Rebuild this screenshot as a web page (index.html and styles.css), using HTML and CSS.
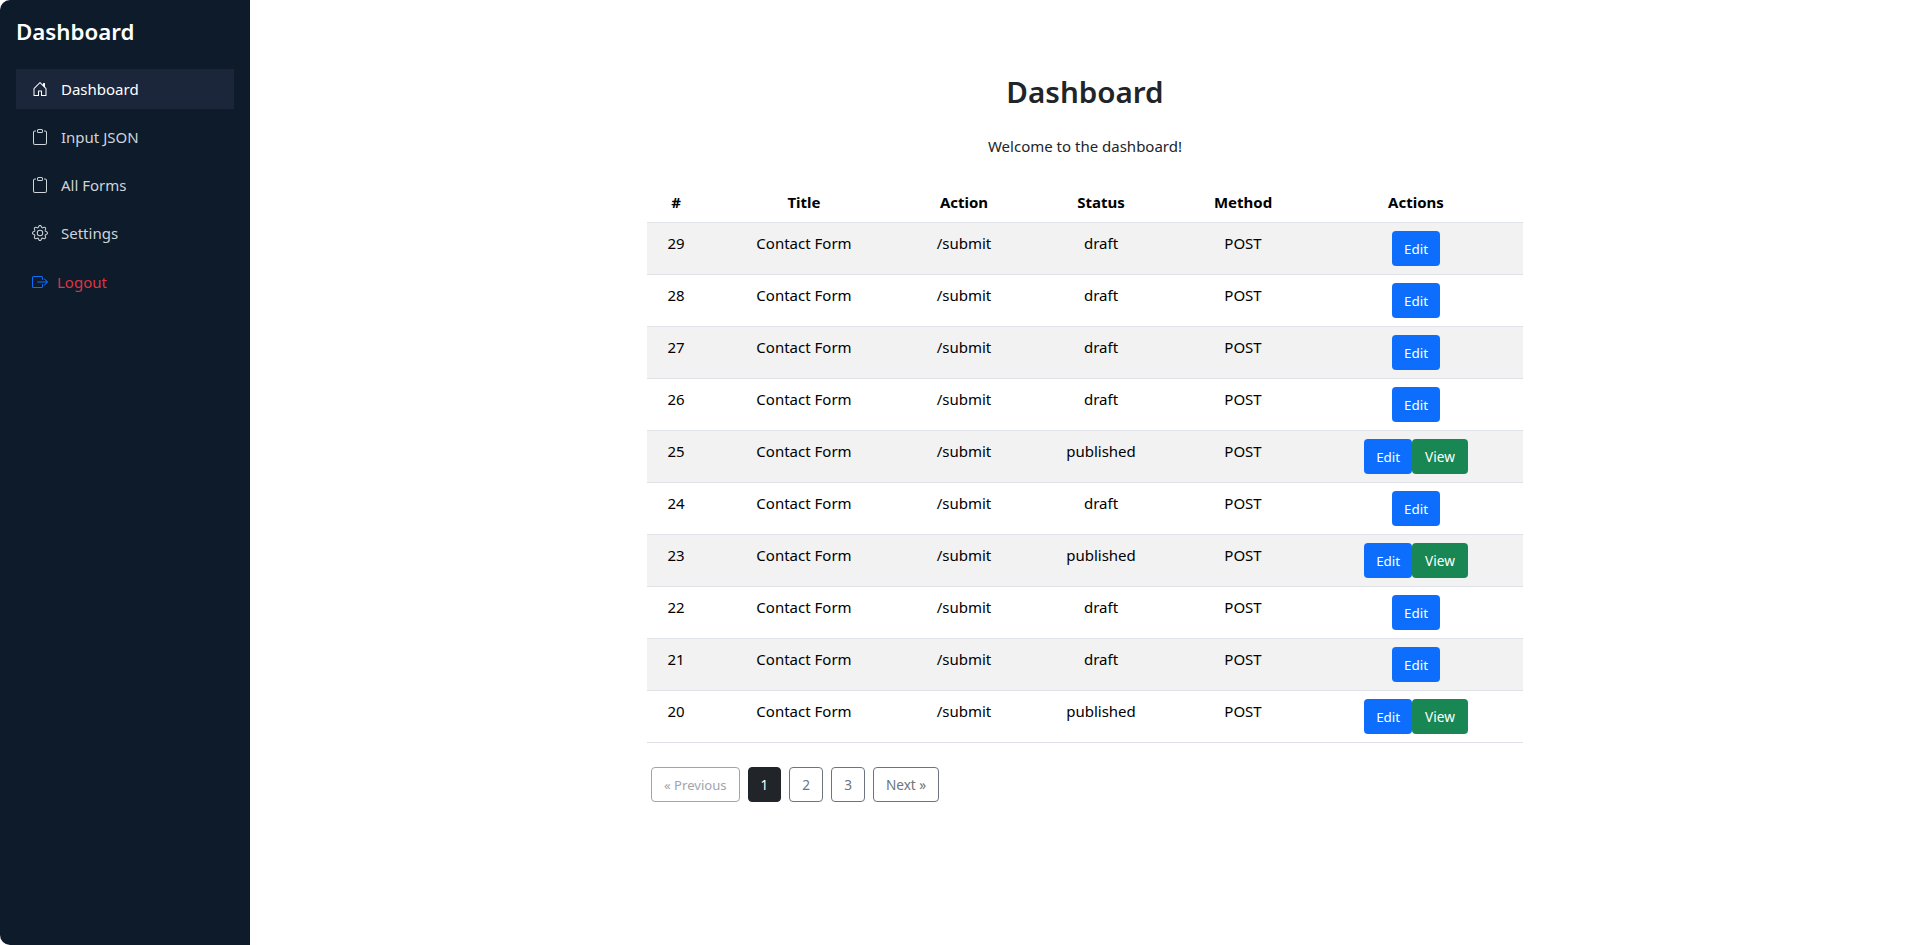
FILE: index.html
```html
<!DOCTYPE html>
<html lang="en">
<head>
<meta charset="utf-8">
<title>Dashboard</title>
<link rel="stylesheet" href="styles.css">
</head>
<body>
<div class="app">
  <aside class="sidebar">
    <div class="brand">Dashboard</div>
    <nav class="nav">
      <a class="nav-link active"><svg class="icon" viewBox="0 0 16 16"><path fill="currentColor" d="M8.354 1.146a.5.5 0 0 0-.708 0l-6 6A.5.5 0 0 0 1.5 7.5v7a.5.5 0 0 0 .5.5h4.5a.5.5 0 0 0 .5-.5v-4h2v4a.5.5 0 0 0 .5.5H14a.5.5 0 0 0 .5-.5v-7a.5.5 0 0 0-.146-.354L13 5.793V2.5a.5.5 0 0 0-.5-.5h-1a.5.5 0 0 0-.5.5v1.293L8.354 1.146ZM2.5 14V7.707l5.5-5.5 5.5 5.5V14H10v-4a.5.5 0 0 0-.5-.5h-3a.5.5 0 0 0-.5.5v4H2.5Z"/></svg>Dashboard</a>
      <a class="nav-link"><svg class="icon" viewBox="0 0 16 16"><path fill="currentColor" d="M4 1.5H3a2 2 0 0 0-2 2V14a2 2 0 0 0 2 2h10a2 2 0 0 0 2-2V3.5a2 2 0 0 0-2-2h-1v1h1a1 1 0 0 1 1 1V14a1 1 0 0 1-1 1H3a1 1 0 0 1-1-1V3.5a1 1 0 0 1 1-1h1v-1Z"/><path fill="currentColor" d="M9.5 1a.5.5 0 0 1 .5.5v1a.5.5 0 0 1-.5.5h-3a.5.5 0 0 1-.5-.5v-1a.5.5 0 0 1 .5-.5h3Zm-3-1A1.5 1.5 0 0 0 5 1.5v1A1.5 1.5 0 0 0 6.5 4h3A1.5 1.5 0 0 0 11 2.5v-1A1.5 1.5 0 0 0 9.5 0h-3Z"/></svg>Input JSON</a>
      <a class="nav-link"><svg class="icon" viewBox="0 0 16 16"><path fill="currentColor" d="M4 1.5H3a2 2 0 0 0-2 2V14a2 2 0 0 0 2 2h10a2 2 0 0 0 2-2V3.5a2 2 0 0 0-2-2h-1v1h1a1 1 0 0 1 1 1V14a1 1 0 0 1-1 1H3a1 1 0 0 1-1-1V3.5a1 1 0 0 1 1-1h1v-1Z"/><path fill="currentColor" d="M9.5 1a.5.5 0 0 1 .5.5v1a.5.5 0 0 1-.5.5h-3a.5.5 0 0 1-.5-.5v-1a.5.5 0 0 1 .5-.5h3Zm-3-1A1.5 1.5 0 0 0 5 1.5v1A1.5 1.5 0 0 0 6.5 4h3A1.5 1.5 0 0 0 11 2.5v-1A1.5 1.5 0 0 0 9.5 0h-3Z"/></svg>All Forms</a>
      <a class="nav-link"><svg class="icon" viewBox="0 0 16 16"><path fill="currentColor" d="M8 4.754a3.246 3.246 0 1 0 0 6.492 3.246 3.246 0 0 0 0-6.492ZM5.754 8a2.246 2.246 0 1 1 4.492 0 2.246 2.246 0 0 1-4.492 0Z"/><path fill="currentColor" d="M9.796 1.343c-.527-1.79-3.065-1.79-3.592 0l-.094.319a.873.873 0 0 1-1.255.52l-.292-.16c-1.64-.892-3.433.902-2.54 2.541l.159.292a.873.873 0 0 1-.52 1.255l-.319.094c-1.79.527-1.79 3.065 0 3.592l.319.094a.873.873 0 0 1 .52 1.255l-.16.292c-.892 1.64.901 3.434 2.541 2.54l.292-.159a.873.873 0 0 1 1.255.52l.094.319c.527 1.79 3.065 1.79 3.592 0l.094-.319a.873.873 0 0 1 1.255-.52l.292.16c1.64.893 3.434-.902 2.54-2.541l-.159-.292a.873.873 0 0 1 .52-1.255l.319-.094c1.79-.527 1.79-3.065 0-3.592l-.319-.094a.873.873 0 0 1-.52-1.255l.16-.292c.893-1.64-.902-3.433-2.541-2.54l-.292.159a.873.873 0 0 1-1.255-.52l-.094-.319Zm-2.633.283c.246-.835 1.428-.835 1.674 0l.094.319a1.873 1.873 0 0 0 2.693 1.115l.291-.16c.764-.415 1.6.42 1.184 1.185l-.159.292a1.873 1.873 0 0 0 1.116 2.692l.318.094c.835.246.835 1.428 0 1.674l-.319.094a1.873 1.873 0 0 0-1.115 2.693l.16.291c.415.764-.42 1.6-1.185 1.184l-.291-.159a1.873 1.873 0 0 0-2.693 1.116l-.094.318c-.246.835-1.428.835-1.674 0l-.094-.319a1.873 1.873 0 0 0-2.692-1.115l-.292.16c-.764.415-1.6-.42-1.184-1.185l.159-.291A1.873 1.873 0 0 0 1.945 8.93l-.319-.094c-.835-.246-.835-1.428 0-1.674l.319-.094A1.873 1.873 0 0 0 3.06 4.377l-.16-.292c-.415-.764.42-1.6 1.185-1.184l.292.159a1.873 1.873 0 0 0 2.692-1.115l.094-.319Z"/></svg>Settings</a>
      <a class="nav-link logout"><svg class="icon logout-icon" viewBox="0 0 16 16"><path fill="currentColor" fill-rule="evenodd" d="M10 12.5a.5.5 0 0 1-.5.5h-8a.5.5 0 0 1-.5-.5v-9a.5.5 0 0 1 .5-.5h8a.5.5 0 0 1 .5.5v2a.5.5 0 0 0 1 0v-2A1.5 1.5 0 0 0 9.5 2h-8A1.5 1.5 0 0 0 0 3.5v9A1.5 1.5 0 0 0 1.5 14h8a1.5 1.5 0 0 0 1.5-1.5v-2a.5.5 0 0 0-1 0v2Z"/><path fill="currentColor" fill-rule="evenodd" d="M15.854 8.354a.5.5 0 0 0 0-.708l-3-3a.5.5 0 0 0-.708.708L14.293 7.5H5.5a.5.5 0 0 0 0 1h8.793l-2.147 2.146a.5.5 0 0 0 .708.708l3-3Z"/></svg>Logout</a>
    </nav>
  </aside>
  <main class="main">
    <div class="container">
      <h1 class="title">Dashboard</h1>
      <p class="welcome">Welcome to the dashboard!</p>
      <table class="table">
        <colgroup><col class="c1"><col class="c2"><col class="c3"><col class="c4"><col class="c5"><col class="c6"></colgroup>
        <thead><tr><th>#</th><th>Title</th><th>Action</th><th>Status</th><th>Method</th><th>Actions</th></tr></thead>
        <tbody>
          <tr><td>29</td><td>Contact Form</td><td>/submit</td><td>draft</td><td>POST</td><td><a class="btn blue">Edit</a></td></tr>
          <tr><td>28</td><td>Contact Form</td><td>/submit</td><td>draft</td><td>POST</td><td><a class="btn blue">Edit</a></td></tr>
          <tr><td>27</td><td>Contact Form</td><td>/submit</td><td>draft</td><td>POST</td><td><a class="btn blue">Edit</a></td></tr>
          <tr><td>26</td><td>Contact Form</td><td>/submit</td><td>draft</td><td>POST</td><td><a class="btn blue">Edit</a></td></tr>
          <tr><td>25</td><td>Contact Form</td><td>/submit</td><td>published</td><td>POST</td><td><a class="btn blue">Edit</a><a class="btn green">View</a></td></tr>
          <tr><td>24</td><td>Contact Form</td><td>/submit</td><td>draft</td><td>POST</td><td><a class="btn blue">Edit</a></td></tr>
          <tr><td>23</td><td>Contact Form</td><td>/submit</td><td>published</td><td>POST</td><td><a class="btn blue">Edit</a><a class="btn green">View</a></td></tr>
          <tr><td>22</td><td>Contact Form</td><td>/submit</td><td>draft</td><td>POST</td><td><a class="btn blue">Edit</a></td></tr>
          <tr><td>21</td><td>Contact Form</td><td>/submit</td><td>draft</td><td>POST</td><td><a class="btn blue">Edit</a></td></tr>
          <tr><td>20</td><td>Contact Form</td><td>/submit</td><td>published</td><td>POST</td><td><a class="btn blue">Edit</a><a class="btn green">View</a></td></tr>
        </tbody>
      </table>
      <div class="pager">
        <a class="page disabled">« Previous</a>
        <a class="page current">1</a>
        <a class="page">2</a>
        <a class="page">3</a>
        <a class="page">Next »</a>
      </div>
    </div>
  </main>
</div>
</body>
</html>
```
FILE: styles.css
```css
* { box-sizing: border-box; }
html, body { margin: 0; height: 100%; background: #fff; }
body { font-family: "Noto Sans", sans-serif; font-size: 15px; line-height: 24px; color: #212529; overflow: hidden; }
.app { display: flex; height: 945px; }
.sidebar { width: 250px; flex: none; background: #0d1b2a; color: #fff; padding: 16px; border-radius: 10px 0 0 10px; }
.brand { font-size: 22.3px; font-weight: 600; line-height: 32px; margin-bottom: 21px; }
.nav { display: flex; flex-direction: column; gap: 8px; }
.nav-link { display: flex; align-items: center; height: 40px; padding: 0 16px; color: #ced4da; font-size: 15px; }
.nav-link.active { background: #1b263b; color: #fff; }
.icon { width: 16px; height: 16px; margin-right: 13px; flex: none; }
.logout { color: #dc3545; margin-top: 1px; }
.logout-icon { color: #0d6efd; margin-right: 9px; }
.main { flex: 1; padding-top: 72px; }
.container { width: 876px; margin: 0 auto; }
.title { font-size: 29.6px; font-weight: 600; line-height: 40px; text-align: center; margin: 0 0 22px; }
.welcome { text-align: center; margin: 0 0 24px; font-size: 15px; }
.table { width: 876px; border-collapse: collapse; table-layout: fixed; color: #000; }
.c1 { width: 58px; } .c2 { width: 198px; } .c3 { width: 122px; } .c4 { width: 152px; } .c5 { width: 132px; } .c6 { width: 214px; }
th, td { text-align: center; padding: 8px; border-bottom: 1px solid #dee2e6; vertical-align: top; }
th { font-weight: 700; }
tbody tr:nth-child(odd) { background: #f2f2f2; }
.btn { display: inline-block; height: 35px; padding: 5px 12px; border: 1px solid transparent; border-radius: 4px; line-height: 24px; color: #fff; }
.blue { background: #0d6efd; font-size: 13.4px; padding: 5px 11px; }
.green { background: #198754; font-size: 13.6px; }
.pager { display: flex; gap: 8px; margin: 24px 0 0 4px; }
.page { display: block; height: 35px; padding: 5px 12px; border: 1px solid #6c757d; border-radius: 4px; font-size: 13.6px; line-height: 24px; color: #6c757d; }
.page.disabled { opacity: .65; font-size: 13.1px; }
.page.current { background: #212529; border-color: #212529; color: #fff; }
```
